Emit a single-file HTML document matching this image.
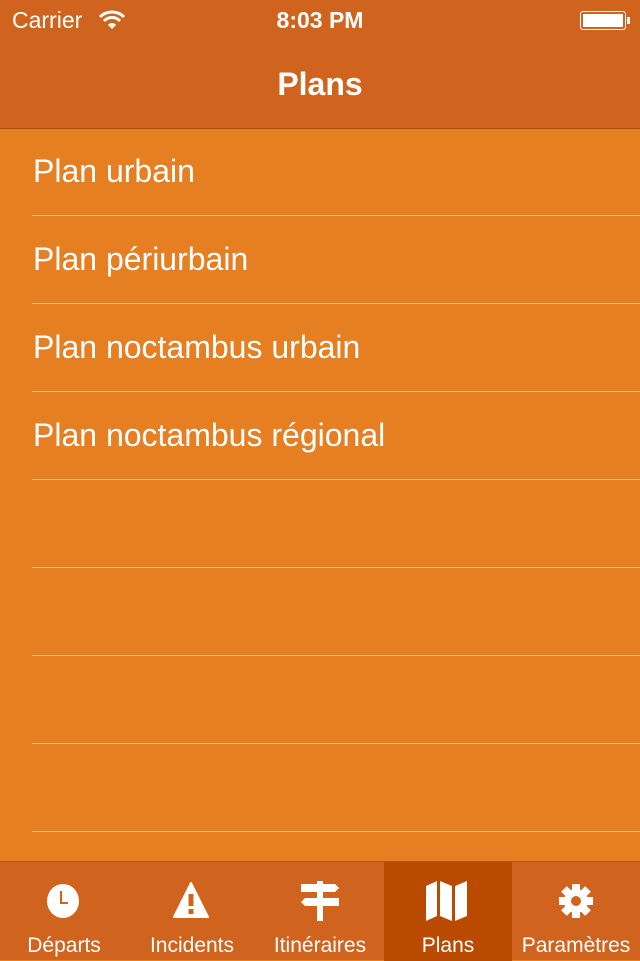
<!DOCTYPE html>
<html><head><meta charset="utf-8"><style>
*{margin:0;padding:0;box-sizing:border-box}
body{width:640px;height:960px;overflow:hidden;background:#E67E22;font-family:"Liberation Sans",sans-serif;color:#fff;position:relative}
.hdr{position:absolute;left:0;top:0;width:640px;height:129px;background:#D0641E;border-bottom:1px solid #A8521A}
.st{position:absolute;top:7px;font-size:23px}
.title{position:absolute;top:66px;width:640px;text-align:center;font-size:32px;font-weight:bold}
.row{position:absolute;left:33px;font-size:32px}
.sep{position:absolute;left:32px;right:0;height:1px;background:#F2C08E}
.tab{position:absolute;top:861px;left:0;width:640px;height:99px;background:#D0641E;border-top:1px solid #B55418}
.t{position:absolute;top:0;height:99px;width:128px;text-align:center}
.t span{position:absolute;left:-10px;right:-10px;top:72px;font-size:21px}
.t svg{position:absolute;left:42px;top:18px}
</style></head><body>
<div class="hdr">
<div class="st" style="left:12px">Carrier</div>
<svg style="position:absolute;left:99px;top:10px" width="26" height="20" viewBox="0 0 26 20"><path d="M1 7a17 17 0 0 1 24 0" stroke="#fff" stroke-width="3" fill="none"/><path d="M5 11a11 11 0 0 1 16 0" stroke="#fff" stroke-width="3" fill="none"/><path d="M9 15a5 5 0 0 1 8 0L13 19z" fill="#fff"/></svg>
<div class="st" style="left:0;width:640px;text-align:center;font-weight:bold">8:03 PM</div>
<div style="position:absolute;left:580px;top:11px;width:46px;height:19px;border:1.5px solid #fff;border-radius:3px;padding:2px"><div style="background:#fff;width:100%;height:100%;border-radius:1px"></div></div>
<div style="position:absolute;left:627px;top:17px;width:3px;height:7px;background:#fff"></div>
<div class="title">Plans</div>
</div>
<div class="row" style="top:153px">Plan urbain</div>
<div class="row" style="top:241px">Plan périurbain</div>
<div class="row" style="top:329px">Plan noctambus urbain</div>
<div class="row" style="top:417px">Plan noctambus régional</div>
<div class="sep" style="top:215px"></div><div class="sep" style="top:303px"></div><div class="sep" style="top:391px"></div><div class="sep" style="top:479px"></div><div class="sep" style="top:567px"></div><div class="sep" style="top:655px"></div><div class="sep" style="top:743px"></div><div class="sep" style="top:831px"></div>
<div class="tab">
<div class="t" style="left:0"><svg width="44" height="44" viewBox="0 0 44 44"><ellipse cx="21" cy="21" rx="16" ry="17" fill="#fff"/><path d="M19 11v12h7" stroke="#D0641E" stroke-width="2" fill="none"/></svg><span>Départs</span></div>
<div class="t" style="left:128px"><svg width="44" height="44" viewBox="0 0 44 44"><path d="M21 3L38 37H4z" fill="#fff" stroke="#fff" stroke-width="2" stroke-linejoin="round"/><rect x="18.5" y="14" width="5" height="12" fill="#D0641E"/><rect x="18.5" y="29" width="5" height="5" fill="#D0641E"/></svg><span>Incidents</span></div>
<div class="t" style="left:256px"><svg width="44" height="44" viewBox="0 0 44 44"><rect x="19" y="1" width="6" height="40" fill="#fff"/><path d="M3 4h34l4 4-4 4H3z" fill="#fff"/><path d="M41 18H7l-4 4 4 4h34z" fill="#fff"/></svg><span>Itinéraires</span></div>
<div class="t" style="left:384px;background:#BA4A00"><svg width="44" height="42" viewBox="0 0 44 42"><path d="M0 6l11-5v35L0 41zM14 1l12 5v35l-12-5zM29 6l12-5v35l-12 5z" fill="#fff"/></svg><span>Plans</span></div>
<div class="t" style="left:512px"><svg width="44" height="44" viewBox="0 0 44 44"><g fill="#fff" transform="translate(22,21)"><circle r="12"/><rect x="-4" y="-17" width="8" height="34"/><rect x="-4" y="-17" width="8" height="34" transform="rotate(45)"/><rect x="-4" y="-17" width="8" height="34" transform="rotate(90)"/><rect x="-4" y="-17" width="8" height="34" transform="rotate(135)"/><circle r="5" fill="#D0641E"/></g></svg><span>Paramètres</span></div>
</div>
</body></html>
